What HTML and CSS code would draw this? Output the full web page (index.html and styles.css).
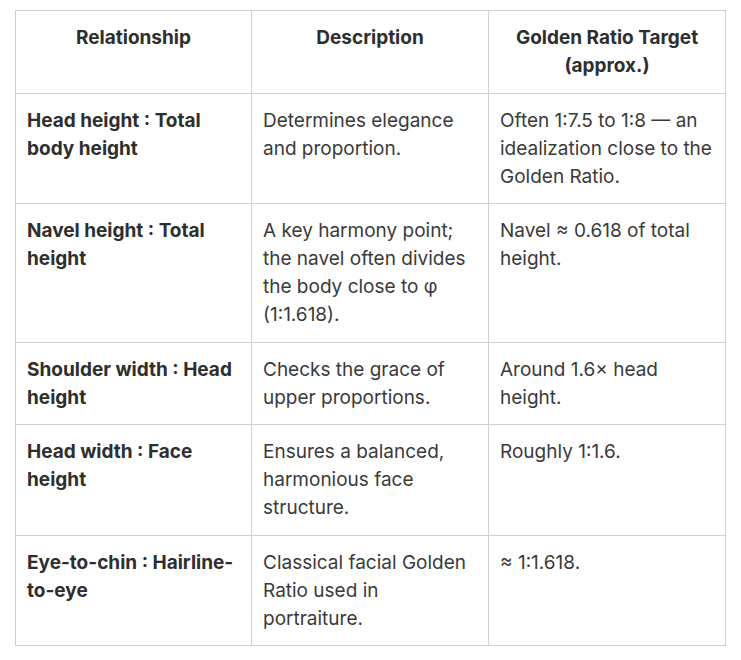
FILE: index.html
```html
<!DOCTYPE html>
<html>
<head>
<meta charset="utf-8">
<link rel="stylesheet" href="styles.css">
</head>
<body>
<div class="wrap">
<table class="ratio-table">
  <colgroup><col class="c1"><col class="c2"><col class="c3"></colgroup>
  <thead>
    <tr><th>Relationship</th><th>Description</th><th>Golden Ratio Target (approx.)</th></tr>
  </thead>
  <tbody>
    <tr><td class="rel">Head height : Total body height</td><td>Determines elegance and proportion.</td><td>Often 1:7.5 to 1:8 — an idealization close to the Golden Ratio.</td></tr>
    <tr><td class="rel">Navel height : Total height</td><td>A key harmony point; the navel often divides the body close to φ (1:1.618).</td><td>Navel ≈ 0.618 of total height.</td></tr>
    <tr><td class="rel">Shoulder width : Head height</td><td>Checks the grace of upper proportions.</td><td>Around 1.6× head height.</td></tr>
    <tr><td class="rel">Head width : Face height</td><td>Ensures a balanced, harmonious face structure.</td><td>Roughly 1:1.6.</td></tr>
    <tr><td class="rel">Eye-to-chin : Hairline-to-eye</td><td>Classical facial Golden Ratio used in portraiture.</td><td>≈ 1:1.618.</td></tr>
  </tbody>
</table>
</div>
</body>
</html>
```
FILE: styles.css
```css
html, body {
  margin: 0;
  padding: 0;
  background: #ffffff;
}
.wrap {
  padding: 10px 0 0 15px;
}
.ratio-table {
  border-collapse: collapse;
  width: 710px;
  table-layout: fixed;
  font-family: Inter, "Noto Sans", sans-serif;
  font-size: 19px;
  line-height: 28px;
  color: #3a3a3a;
}
.c1 { width: 236px; }
.c2 { width: 237px; }
.c3 { width: 237px; }
.ratio-table th,
.ratio-table td {
  border: 1px solid #d0d0d0;
  padding: 13px 11px 12.5px 11px;
  vertical-align: top;
  text-align: left;
}
.ratio-table th {
  font-weight: 700;
  text-align: center;
  color: #2e2e2e;
}
.ratio-table td.rel {
  font-weight: 700;
  color: #2e2e2e;
}
```
